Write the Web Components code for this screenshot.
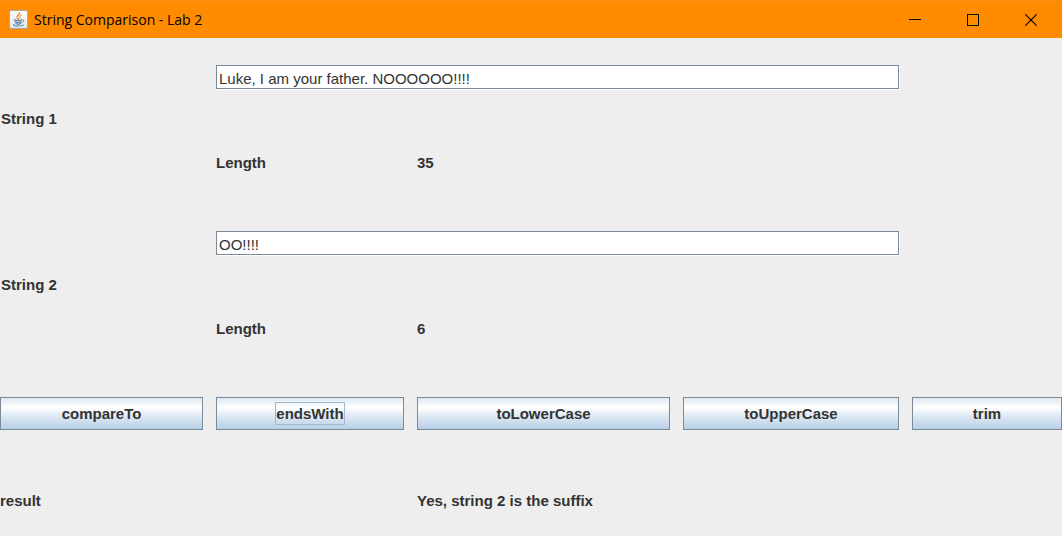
<!DOCTYPE html>
<html lang="en">
<head>
<meta charset="utf-8">
<title>String Comparison - Lab 2</title>
<style>
  body {
    margin: 0;
    min-height: 100vh;
    background: #eeeeee;
    color: #333333;
    font: bold 15px/20px "Liberation Sans", Arial, sans-serif;
    --columns: minmax(0, 203fr) minmax(0, 188fr) minmax(0, 253fr) minmax(0, 216fr) minmax(0, 150fr);
    --gap: 13px;
    --edge: #7a8a99;
  }
</style>
</head>
<body>
<lab-window>
  <title-bar slot="title">String Comparison - Lab 2</title-bar>
  <string-entry label="String 1" value="Luke, I am your father. NOOOOOO!!!!" length="35"></string-entry>
  <string-entry label="String 2" value="OO!!!!" length="6"></string-entry>
  <action-row>
    <metal-button>compareTo</metal-button>
    <metal-button focused>endsWith</metal-button>
    <metal-button>toLowerCase</metal-button>
    <metal-button>toUpperCase</metal-button>
    <metal-button>trim</metal-button>
  </action-row>
  <result-row label="result">Yes, string 2 is the suffix</result-row>
</lab-window>

<template id="window-template">
  <style>
    :host { display: block; }
    main { padding-top: 27px; }
  </style>
  <slot name="title"></slot>
  <main><slot></slot></main>
</template>

<template id="title-template">
  <style>
    :host { display: block; }
    header {
      display: flex; align-items: center; box-sizing: border-box; height: 38px;
      padding: 0 2px 0 9px; background: #ff8c00; border-top: 1px solid #fc9218;
      color: #000; font: 14px/20px "Open Sans", "Segoe UI", sans-serif;
    }
    h1 { flex: 1; margin: 0 0 0 5px; font: inherit; white-space: nowrap; }
    svg { display: block; }
    button {
      display: grid; place-items: center; width: 58px; height: 36px;
      padding: 0; border: 0; background: none; color: inherit;
    }
    nav { display: flex; }
  </style>
  <header>
    <svg width="20" height="20" viewBox="0 0 20 20" aria-hidden="true">
      <defs><linearGradient id="tile" x1="0" y1="0" x2="0" y2="1"><stop offset="0" stop-color="#ffffff"/><stop offset="1" stop-color="#dfe5e9"/></linearGradient></defs>
      <rect x="0.5" y="0.5" width="18" height="18" rx="1.5" fill="url(#tile)" stroke="#a9aaa5"/>
      <g fill="none" stroke-linecap="round">
        <path d="M10.6 2.8C11.4 4.8 7 5.6 8.2 7.4L9.5 9" stroke="#ef8a35" stroke-width="1.5"/>
        <path d="M12.5 5.3C10.7 6.2 10.4 6.9 11.2 8.2" stroke="#ef9b55" stroke-width="1.1"/>
        <path d="M5.6 9.7C4.8 10.5 12.3 10.5 12.8 9.8" stroke="#5c83a3" stroke-width="1.2"/>
        <path d="M6.3 11.8C7.2 12.6 11 12.5 12 11.8M7 13.5C8.2 14.2 10.5 14.1 11.4 13.5" stroke="#5c83a3" stroke-width="1.4"/>
        <path d="M13 10.1C16 9.3 15.4 12 12.8 12.7" stroke="#6f91ac"/>
        <path d="M4.8 14.6C3 15.8 11.6 16.8 14.4 15.1" stroke="#6f91ac" stroke-width="1.2"/>
      </g>
    </svg>
    <h1><slot></slot></h1>
    <nav aria-label="Window">
      <button type="button" aria-label="Minimize"><svg width="12" height="12" shape-rendering="crispEdges"><path d="M0 5.5H12" stroke="#000"/></svg></button>
      <button type="button" aria-label="Maximize"><svg width="12" height="12" shape-rendering="crispEdges"><rect x="0.5" y="0.5" width="11" height="11" fill="none" stroke="#000"/></svg></button>
      <button type="button" aria-label="Close"><svg width="12" height="12"><path d="M0.3 0.3L11.7 11.7M11.7 0.3L0.3 11.7" stroke="#000" stroke-width="1.1"/></svg></button>
    </nav>
  </header>
</template>

<template id="entry-template">
  <style>
    :host { display: block; margin-bottom: 58px; }
    .entry {
      display: grid; grid-template-columns: var(--columns); column-gap: var(--gap);
      grid-template-rows: auto auto; row-gap: 63px;
    }
    label { grid-column: 1; grid-row: 1 / 3; align-self: center; padding-left: 1px; }
    input {
      grid-column: 2 / 5; grid-row: 1; box-sizing: border-box; width: 100%; height: 24px;
      margin: 0 0 1px; padding: 2px 2px 0; border: 1px solid var(--edge); border-radius: 0;
      box-shadow: 1px 1px #fff; outline: 0; background: #fff; color: #333;
      font: 15px/18px "Liberation Sans", Arial, sans-serif;
    }
    .name { grid-column: 2; grid-row: 2; }
    output { grid-column: 3; grid-row: 2; }
  </style>
  <div class="entry">
    <label for="text"></label>
    <input id="text" type="text" autocomplete="off" spellcheck="false">
    <span class="name">Length</span>
    <output for="text"></output>
  </div>
</template>

<template id="actions-template">
  <style>
    :host { display: grid; grid-template-columns: var(--columns); column-gap: var(--gap); margin-bottom: 61px; }
  </style>
  <slot></slot>
</template>

<template id="button-template">
  <style>
    :host { display: block; }
    button {
      display: flex; align-items: center; justify-content: center;
      box-sizing: border-box; width: 100%; height: 33px; padding: 0;
      border: 1px solid var(--edge); border-radius: 0; color: inherit; font: inherit;
      background: linear-gradient(#dde8f3 0%, #ffffff 30%, #dde8f3 60%, #b8cfe5 100%);
    }
    span { padding-top: 1px; border: 1px solid transparent; }
    :host([focused]) span { border-color: #a3b8cc; }
  </style>
  <button type="button"><span><slot></slot></span></button>
</template>

<template id="result-template">
  <style>
    :host { display: grid; grid-template-columns: var(--columns); column-gap: var(--gap); }
    output { grid-column: 3 / 6; }
  </style>
  <span></span>
  <output><slot></slot></output>
</template>

<script>
  class LabElement extends HTMLElement {
    constructor() {
      super();
      const template = document.getElementById(this.constructor.template);
      this.attachShadow({ mode: "open" }).append(template.content.cloneNode(true));
    }
  }
  class LabWindow extends LabElement { static template = "window-template"; }
  class TitleBar extends LabElement { static template = "title-template"; }
  class ActionRow extends LabElement { static template = "actions-template"; }
  class MetalButton extends LabElement { static template = "button-template"; }
  class StringEntry extends LabElement {
    static template = "entry-template";
    connectedCallback() {
      const input = this.shadowRoot.querySelector("input");
      const output = this.shadowRoot.querySelector("output");
      this.shadowRoot.querySelector("label").textContent = this.getAttribute("label");
      input.value = this.getAttribute("value");
      output.textContent = this.getAttribute("length");
      input.addEventListener("input", () => { output.textContent = input.value.length; });
    }
  }
  class ResultRow extends LabElement {
    static template = "result-template";
    connectedCallback() {
      this.shadowRoot.querySelector("span").textContent = this.getAttribute("label");
    }
  }
  customElements.define("lab-window", LabWindow);
  customElements.define("title-bar", TitleBar);
  customElements.define("action-row", ActionRow);
  customElements.define("metal-button", MetalButton);
  customElements.define("string-entry", StringEntry);
  customElements.define("result-row", ResultRow);
</script>
</body>
</html>
